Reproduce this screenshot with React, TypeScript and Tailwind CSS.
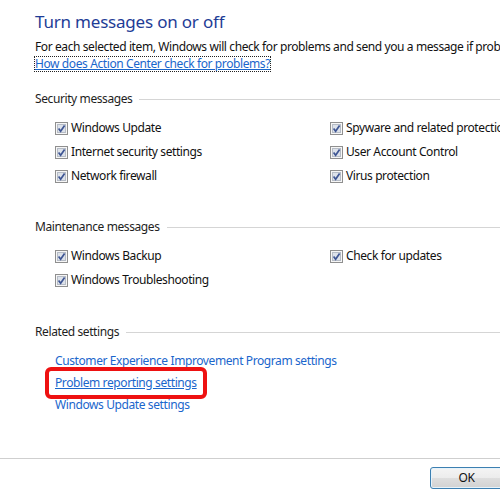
import React from "react";

const security = [
  ["Windows Update", "Spyware and related protection"],
  ["Internet security settings", "User Account Control"],
  ["Network firewall", "Virus protection"],
];

const maintenance = [
  ["Windows Backup", "Check for updates"],
  ["Windows Troubleshooting", ""],
];

function CheckBox() {
  return (
    <svg width="13" height="13" viewBox="0 0 13 13" className="shrink-0">
      <rect x="0.5" y="0.5" width="12" height="12" fill="#f6f6f6" stroke="#8f8f8f" />
      <rect x="2.5" y="2.5" width="8" height="8" fill="#dde2ea" stroke="#b6bcc6" />
      <path d="M3.6 6.6 L5.6 9.2 L9.6 3.4" stroke="#3f5694" strokeWidth="1.7" fill="none" />
    </svg>
  );
}

function Item({ label }: { label: string }) {
  if (!label) return <div />;
  return (
    <div className="flex items-center gap-[3px] h-6 whitespace-nowrap">
      <CheckBox />
      <span>{label}</span>
    </div>
  );
}

function GroupHeader({ title }: { title: string }) {
  return (
    <div className="flex items-center h-4 text-[#1e1e1e]">
      <span className="whitespace-nowrap">{title}</span>
      <div className="flex-1 h-px bg-[#d5d5d5] ml-[7px]" />
    </div>
  );
}

function Group({ rows }: { rows: string[][] }) {
  return (
    <div className="grid grid-cols-[275px_1fr] pl-[20px] mt-[9px]">
      {rows.map((r, i) => (
        <React.Fragment key={i}>
          <Item label={r[0]} />
          <Item label={r[1]} />
        </React.Fragment>
      ))}
    </div>
  );
}

export default function App() {
  return (
    <div className="w-[500px] h-[500px] bg-white overflow-hidden flex flex-col font-['Noto_Sans',sans-serif] text-[12px] tracking-[-0.4px] text-[#111]">
      <div className="flex-1 pl-[35px] pt-[11px]">
        <h1 className="text-[17px] leading-[22px] tracking-[-0.2px] text-[#1e3c96]">Turn messages on or off</h1>
        <p className="mt-[6px] leading-4 whitespace-nowrap">
          For each selected item, Windows will check for problems and send you a message if problems are found.
        </p>
        <a className="inline-block -ml-px leading-[14px] border border-dotted border-[#222] text-[#1a66cc] underline">
          How does Action Center check for problems?
        </a>

        <div className="mt-[18px]">
          <GroupHeader title="Security messages" />
          <Group rows={security} />
        </div>

        <div className="mt-[31px]">
          <GroupHeader title="Maintenance messages" />
          <Group rows={maintenance} />
        </div>

        <div className="mt-[32px]">
          <GroupHeader title="Related settings" />
          <div className="flex flex-col items-start pl-[20px] mt-[9px] text-[#1a66cc]">
            <a className="leading-[23px]">Customer Experience Improvement Program settings</a>
            <span className="relative">
              <a className="leading-[22px] underline">Problem reporting settings</a>
              <span className="absolute -left-[10px] -right-[10px] -top-[5px] -bottom-[5px] border-[4px] border-[#ee1111] rounded-[6px]" />
            </span>
            <a className="leading-[22px]">Windows Update settings</a>
          </div>
        </div>
      </div>

      <div className="h-[42px] border-t border-[#cfcfcf] flex justify-end items-start pt-[8px]">
        <button className="w-[73px] h-[22px] -mr-[3px] rounded-[3px] border border-[#3c7fb1] bg-[linear-gradient(#f4f4f4_0%,#ececec_50%,#dedede_50%,#d2d2d2_100%)] shadow-[inset_0_0_0_1px_#e6f3fb] text-[12px] text-[#111]">
          OK
        </button>
      </div>
    </div>
  );
}
